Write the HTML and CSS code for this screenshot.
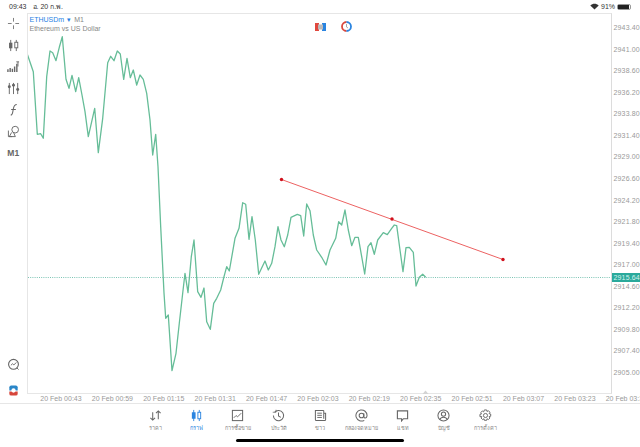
FILE: index.html
```html
<!DOCTYPE html>
<html lang="th">
<head>
  <meta charset="UTF-8" />
  <meta name="viewport" content="width=device-width, initial-scale=1.0"/>
  <title>ETHUSDm M1</title>
  <link rel="stylesheet" href="styles.css">
</head>
<body>
  <div class="status">
    <span class="clock">09:43</span>
    <span class="date">อ. 20 ก.พ.</span>
    <span class="status-right">
      <svg class="wifi" viewBox="0 0 12 9"><path d="M6 8.6 0.4 3.2C3.6 0.2 8.4 0.2 11.6 3.2Z" fill="#333"/></svg>
      <span>91%</span>
      <span class="battery"><span class="battery-fill"></span></span>
    </span>
  </div>

  <div class="main">
    <div class="toolbar">
      <div class="tool"><svg viewBox="0 0 14 14" class="ico"><path d="M7 1v4M7 9v4M1 7h4M9 7h4" stroke="#777" fill="none"/></svg></div>
      <div class="tool"><svg viewBox="0 0 14 14" class="ico"><path d="M4 1v12M10 1v12" stroke="#666"/><rect x="2.2" y="4" width="3.6" height="6" fill="#666"/><rect x="8.4" y="3.5" width="3.2" height="6" fill="#fff" stroke="#666"/></svg></div>
      <div class="tool"><svg viewBox="0 0 14 14" class="ico"><path d="M1 13V10M3.4 13V8.5M5.8 13V9.5M8.2 13V7M10.6 13V4" stroke="#666" stroke-width="1.5"/><path d="M10 2h3M11.8 2v5" stroke="#666"/></svg></div>
      <div class="tool"><svg viewBox="0 0 14 14" class="ico"><path d="M2.5 1v12M7 1v12M11.5 1v12" stroke="#666"/><circle cx="2.5" cy="5" r="1.6" fill="#666"/><circle cx="7" cy="3.5" r="1.6" fill="#666"/><circle cx="11.5" cy="8" r="1.6" fill="#666"/></svg></div>
      <div class="tool"><svg viewBox="0 0 14 14" class="ico"><path d="M4 13C6.5 13 6 9 7 5.5 7.6 3 8.5 1.5 10.5 1.5M4.5 7H9.5" stroke="#666" stroke-width="1.1" fill="none"/></svg></div>
      <div class="tool"><svg viewBox="0 0 14 14" class="ico"><circle cx="8.8" cy="5" r="3.6" fill="none" stroke="#666"/><path d="M1.5 6v6.5h4M5 8 2.5 12.500h6.500L7 8" fill="none" stroke="#666"/></svg></div>
      <div class="tool tool-text">M1</div>
      <div class="tool tool-push"><svg viewBox="0 0 14 14" class="ico"><circle cx="7" cy="6.800" r="5.300" fill="none" stroke="#666" stroke-width="1.200"/><path d="M4.200 7.800 6 6.200l1.400 1.300 2.600-2.700M10.500 10.500l2 2" fill="none" stroke="#666"/></svg></div>
      <div class="tool tool-logo"><svg viewBox="0 0 14 14" class="ico"><path d="M2.500 7V3.500Q2.500 1.500 4.500 1.500h5Q11.500 1.500 11.500 3.500V7Z" fill="#2a86c8"/><path d="M2.500 8v2.500q0 2 2 2h5q2 0 2-2V8Z" fill="#d6463c"/><circle cx="7" cy="7" r="2.300" fill="#fff"/></svg></div>
    </div>

    <div class="chart">
      <svg class="chart-svg" viewBox="28 14 583 380">
        <line x1="28" y1="277.500" x2="611" y2="277.500" stroke="#7cc4b4" stroke-width="1" stroke-dasharray="1 1.200"/>
        <polyline fill="none" stroke="#66bd98" stroke-width="1.300" stroke-linejoin="round" points="27.500,54.700 33.300,71.700 37.300,134.300 40.700,133.700 43.300,138.300 46.700,76.700 50,51 52.700,52.700 56,60.700 59.300,47.300 62.300,36.700 66,79.300 69,88.300 72,75.300 75.700,91.700 78.700,77.700 82,95 85,111.700 88.300,136.700 94.700,108.300 98.300,152.700 102.700,118.300 107.700,62.700 110.700,56.300 114,60.700 117.300,51 120.300,54 123.700,79.300 127,58.300 130.300,77.700 133.300,70 136.700,85 140,75 143.300,79.300 146.700,93.300 150,120 152.700,155 155.700,134.300 158,166.700 160.700,226.700 164,293 165.700,318.300 168.300,315 172,370.700 176,353.300 179.300,323.300 182.700,293.300 185,273.300 188,292.700 191.300,256.700 194,240 197.700,291.700 201,297.300 204,288 206.700,321.700 210.300,329.300 213.700,303.300 216.700,298.300 220.700,290 224,276.700 226.700,266.700 229.300,271 235,238.300 239,228.300 242.700,202.700 245.700,204.300 249,239.300 252,216.700 255.300,240 258.700,274.300 265,261 268.300,270 271.700,263.300 275,246.700 278,226.700 281,240 284.300,246.700 287.700,235 291,217.300 297.300,214.300 300.700,215.700 303.700,236 306.700,204 310,210.700 313.300,235 316.700,250 321.700,257.300 326,265 330,250 335.700,238.300 338.700,221.700 341.700,225 345,210 348.300,230 351.700,245.700 355,237.300 358.300,237.300 361.700,256.700 364.700,274 368,246.700 371,242.700 374.300,254.300 377.700,240 383.300,232.700 387.300,234.700 391.700,228.300 394.300,225 396.700,225.700 400,250 403,271.700 406,247.700 409.300,247.300 413.300,252.300 416,286 419.300,277.300 422.700,274.300 425.700,277.300"/>
        <line x1="281.500" y1="179.500" x2="503" y2="259.500" stroke="#ec6262" stroke-width="1"/>
        <circle cx="281.500" cy="179.500" r="1.700" fill="#d0101c"/>
        <circle cx="392" cy="219" r="1.700" fill="#d0101c"/>
        <circle cx="503" cy="259.500" r="1.700" fill="#d0101c"/>
        <path d="M422.500 394 425.500 390.500 428.500 394Z" fill="#d4d4d4"/>
      </svg>
      <div class="legend">
        <div class="legend-top"><span class="symbol">ETHUSDm</span><span class="sym-dot">▾</span><span>M1</span></div>
        <div>Ethereum vs US Dollar</div>
      </div>
      <div class="badges">
        <svg viewBox="0 0 11 8" class="badge-one"><rect width="4" height="8" fill="#e0483e"/><rect x="7" width="4" height="8" fill="#2a84e0"/><rect x="3" y="1.500" width="5" height="5" fill="#bbb"/></svg>
        <svg viewBox="0 0 11 11" class="badge-two"><path d="M5.500 1A4.500 4.500 0 0 0 5.500 10" fill="none" stroke="#d9483e" stroke-width="1.800"/><path d="M5.500 1A4.500 4.500 0 0 1 5.500 10" fill="none" stroke="#2a84e0" stroke-width="1.800"/><path d="M5.500 3v3l1.500 1" stroke="#aaa" fill="none"/></svg>
      </div>
    </div>

    <div class="price-axis">
      <span>2943.40</span><span>2941.00</span><span>2938.60</span><span>2936.20</span><span>2933.80</span><span>2931.40</span><span>2929.00</span><span>2926.60</span><span>2924.20</span><span>2921.80</span><span>2919.40</span><span>2917.00</span><span>2914.60</span><span>2912.20</span><span>2909.80</span><span>2907.40</span><span>2905.00</span>
      <div class="price-tag">2915.64</div>
    </div>
  </div>

  <div class="time-axis">
    <span>20 Feb 00:43</span><span>20 Feb 00:59</span><span>20 Feb 01:15</span><span>20 Feb 01:31</span><span>20 Feb 01:47</span><span>20 Feb 02:03</span><span>20 Feb 02:19</span><span>20 Feb 02:35</span><span>20 Feb 02:51</span><span>20 Feb 03:07</span><span>20 Feb 03:23</span><span>20 Feb 03:39</span>
  </div>

  <div class="tabs">
    <div class="tab">
      <svg viewBox="0 0 14 14" class="tab-ico"><path d="M4 3.500V12M1.500 9.500 4 12l2.500-2.500M10 11V2M7.500 4.500 10 2l2.500 2.500" fill="none" stroke="#666" stroke-width="1.100"/></svg>
      <span>ราคา</span>
    </div>
    <div class="tab tab-active">
      <svg viewBox="0 0 14 14" class="tab-ico"><path d="M4 1v12M10 1v12" stroke="#2a84e0"/><rect x="2" y="3.500" width="4" height="7" fill="#2a84e0"/><rect x="8.500" y="3.500" width="3" height="7" fill="#fff" stroke="#2a84e0"/></svg>
      <span>กราฟ</span>
    </div>
    <div class="tab">
      <svg viewBox="0 0 14 14" class="tab-ico"><rect x="1.500" y="1.500" width="11" height="11" fill="none" stroke="#666" stroke-width="1.100"/><path d="M3 9.500 5.500 7l1.500 1.500L11 4.500" fill="none" stroke="#666"/></svg>
      <span>การซื้อขาย</span>
    </div>
    <div class="tab">
      <svg viewBox="0 0 14 14" class="tab-ico"><path d="M2.800 3.500A5.500 5.500 0 1 1 1.500 7M7 3.800V7.500L9.500 9" fill="none" stroke="#666" stroke-width="1.100"/><path d="M.8 3.500h3.500V.8" fill="none" stroke="#666" stroke-width=".8"/></svg>
      <span>ประวัติ</span>
    </div>
    <div class="tab">
      <svg viewBox="0 0 14 14" class="tab-ico"><path d="M10.500 1.500h-9v10q0 1 1 1h9q1 0 1-1V4.500h-2M10.500 1.500v9" fill="none" stroke="#666" stroke-width="1.100"/><path d="M3.500 4.500h5M3.500 6.800h5M3.500 9.100h5" stroke="#666"/></svg>
      <span>ข่าว</span>
    </div>
    <div class="tab">
      <svg viewBox="0 0 14 14" class="tab-ico"><circle cx="7" cy="7" r="2.500" fill="none" stroke="#666" stroke-width="1.100"/><path d="M9.500 4.500V8q0 1.800 1.600 1.800T13 7A6 6 0 1 0 10 12.200" fill="none" stroke="#666" stroke-width="1.100"/></svg>
      <span>กล่องจดหมาย</span>
    </div>
    <div class="tab">
      <svg viewBox="0 0 14 14" class="tab-ico"><path d="M1.500 2h11v8.500H8L6 12.800V10.500H1.500Z" fill="none" stroke="#666" stroke-width="1.200"/></svg>
      <span>แชท</span>
    </div>
    <div class="tab">
      <svg viewBox="0 0 14 14" class="tab-ico"><circle cx="7" cy="7" r="6" fill="none" stroke="#666" stroke-width="1.100"/><circle cx="7" cy="5.500" r="2.300" fill="none" stroke="#666" stroke-width="1.100"/><path d="M3 11.500Q4 8.800 7 8.800T11 11.500" fill="none" stroke="#666" stroke-width="1.100"/></svg>
      <span>บัญชี</span>
    </div>
    <div class="tab">
      <svg viewBox="0 0 14 14" class="tab-ico"><circle cx="7" cy="7" r="2.200" fill="none" stroke="#666"/><path d="M5.800 1h2.400l.4 1.700 1.500-.9 1.700 1.700-.9 1.500 1.700.4v2.400l-1.700.4.9 1.500-1.700 1.700-1.500-.9-.4 1.700H5.800l-.4-1.700-1.500.9-1.700-1.700.9-1.500L1 8.200V5.800l1.700-.4-.9-1.500 1.700-1.700 1.500.9Z" fill="none" stroke="#666"/></svg>
      <span>การตั้งค่า</span>
    </div>
  </div>
  <div class="home-bar"></div>
</body>
</html>
```

FILE: styles.css
```css
* {
  box-sizing: border-box;
}

html, body {
  margin: 0;
  height: 100%;
}

body {
  width: 640px;
  height: 447px;
  overflow: hidden;
  background: #fff;
  display: flex;
  flex-direction: column;
  font-family: "Liberation Sans", "Noto Sans", sans-serif;
  color: #777;
}

.status {
  height: 13px;
  flex: none;
  display: flex;
  align-items: center;
  padding: 0 9px 0 9px;
  font-size: 7px;
  color: #333;
  gap: 6px;
}

.status-right {
  margin-left: auto;
  display: flex;
  align-items: center;
  gap: 2px;
}

.wifi {
  width: 9px;
  height: 7px;
}

.battery {
  width: 14px;
  height: 6px;
  border: 1px solid #999;
  border-radius: 2px;
  display: block;
}

.battery-fill {
  display: block;
  width: 90%;
  height: 100%;
  background: #222;
}

.main {
  height: 381px;
  flex: none;
  display: flex;
}

.toolbar {
  width: 27px;
  display: flex;
  flex-direction: column;
}

.tool {
  height: 21.5px;
  flex: none;
  display: flex;
  align-items: center;
  justify-content: center;
}

.ico {
  width: 13px;
  height: 13px;
}

.tool-text {
  font-size: 8.5px;
  font-weight: bold;
  color: #666;
}

.tool-push {
  margin-top: auto;
  margin-bottom: 4px;
}

.tool-logo {
  margin-bottom: -7px;
}

.chart {
  position: relative;
  flex: 1;
  border: 1px solid #e6e6e6;
  border-right-color: #dcdcdc;
}

.chart-svg {
  display: block;
  width: 583px;
  height: 380px;
}

.legend {
  position: absolute;
  left: 2px;
  top: 1px;
  font-size: 7px;
  line-height: 9px;
  color: #888;
}

.legend-top {
  display: flex;
  gap: 3px;
}

.symbol, .sym-dot {
  color: #2a82e4;
}

.badges {
  position: absolute;
  top: 7px;
  left: 287px;
  display: flex;
  align-items: center;
  gap: 15px;
}

.badge-one {
  width: 11px;
  height: 8px;
}

.badge-two {
  width: 11px;
  height: 11px;
}

.price-axis {
  position: relative;
  width: 29px;
  padding: 4.2px 0 0 2px;
  display: flex;
  flex-direction: column;
  font-size: 7px;
  letter-spacing: 0.15px;
  color: #999;
}

.price-axis span {
  height: 21.56px;
  line-height: 21.56px;
  flex: none;
}

.price-tag {
  position: absolute;
  left: 0;
  right: 0;
  top: 260px;
  height: 9px;
  line-height: 9px;
  padding-left: 2px;
  background: #2aa99b;
  color: #d8f3ee;
}

.time-axis {
  height: 10px;
  flex: none;
  display: flex;
  padding-left: 35.3px;
  border-bottom: 1px solid #e6e6e6;
  overflow: hidden;
  font-size: 7px;
  line-height: 9px;
  color: #999;
}

.time-axis span {
  flex: none;
  width: 51.4px;
  text-align: center;
  white-space: nowrap;
}

.tabs {
  flex: none;
  display: flex;
  padding: 5px 0 0 134.4px;
}

.tab {
  width: 41.25px;
  flex: none;
  display: flex;
  flex-direction: column;
  align-items: center;
  font-size: 5.5px;
  line-height: 8px;
  white-space: nowrap;
  color: #888;
}

.tab-active {
  color: #2a84e0;
}

.tab-ico {
  width: 13px;
  height: 13px;
  margin-bottom: 2px;
}

.home-bar {
  flex: none;
  width: 168px;
  height: 3px;
  border-radius: 2px;
  background: #000;
  margin: 7px auto 0;
}
```
